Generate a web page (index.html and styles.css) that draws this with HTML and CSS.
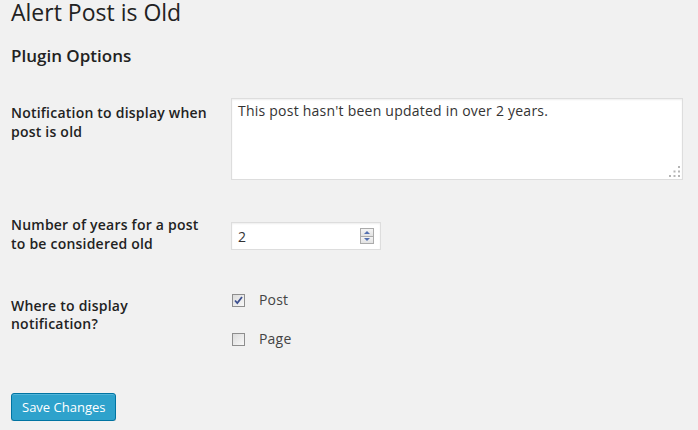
FILE: index.html
```html
<!DOCTYPE html>
<html>
<head>
<meta charset="utf-8">
<link rel="stylesheet" href="styles.css">
</head>
<body>
<div class="wrap">
  <h1 class="title">Alert Post is Old</h1>
  <h2 class="section">Plugin Options</h2>
  <div class="form-table">
    <div class="row row-1">
      <div class="th">Notification to display when post is old</div>
      <div class="td">
        <div class="textarea">This post hasn't been updated in over 2 years.
          <svg class="grip" width="12" height="12" viewBox="0 0 12 12">
            <rect x="9" y="0" width="2" height="2"/>
            <rect x="4.5" y="4.5" width="2" height="2"/><rect x="9" y="4.5" width="2" height="2"/>
            <rect x="0" y="9" width="2" height="2"/><rect x="4.5" y="9" width="2" height="2"/><rect x="9" y="9" width="2" height="2"/>
          </svg>
        </div>
      </div>
    </div>
    <div class="row row-2">
      <div class="th">Number of years for a post to be considered old</div>
      <div class="td">
        <div class="number">
          <span class="num-value">2</span>
          <span class="spinner">
            <span class="spin-btn"><span class="arrow-up"></span></span>
            <span class="spin-btn"><span class="arrow-down"></span></span>
          </span>
        </div>
      </div>
    </div>
    <div class="row row-3">
      <div class="th">Where to display notification?</div>
      <div class="td">
        <div class="option">
          <span class="checkbox">
            <svg width="11" height="11" viewBox="0 0 11 11"><path d="M2 5.5 L4.3 8 L9 2" fill="none" stroke="#3c4f8f" stroke-width="1.8"/></svg>
          </span>
          <span class="opt-label">Post</span>
        </div>
        <div class="option option-2">
          <span class="checkbox"></span>
          <span class="opt-label">Page</span>
        </div>
      </div>
    </div>
  </div>
  <div class="submit"><span class="button">Save Changes</span></div>
</div>
</body>
</html>
```
FILE: styles.css
```css
html, body {
  margin: 0;
  padding: 0;
  background: #f1f1f1;
}
body {
  font-family: "Open Sans", "Liberation Sans", sans-serif;
  color: #444;
}
.wrap {
  padding: 0 15px 0 11px;
}
.title {
  margin: 0;
  font-size: 23px;
  font-weight: 400;
  line-height: 25px;
  color: #222;
}
.section {
  margin: 20px 0 0;
  font-size: 17px;
  font-weight: 600;
  line-height: 22px;
  color: #222;
}
.form-table {
  margin-top: 16px;
}
.row {
  display: flex;
  align-items: flex-start;
}
.th {
  width: 200px;
  padding-right: 20px;
  font-size: 14px;
  font-weight: 600;
  line-height: 18.6px;
  letter-spacing: 0.22px;
  color: #222;
}
.td {
  flex: 1;
  padding-bottom: 15px;
}
.row-1 .th { padding-top: 21px; }
.row-1 .td { padding-top: 15px; }
.row-2 .th { padding-top: 21px; padding-bottom: 20px; }
.row-2 .td { padding-top: 27px; }
.row-3 .th { padding-top: 23.5px; }
.row-3 .td { padding-top: 20px; }

.textarea {
  position: relative;
  box-sizing: border-box;
  width: 452px;
  height: 82px;
  background: #fff;
  border: 1px solid #ddd;
  box-shadow: inset 0 1px 2px rgba(0,0,0,.07);
  padding: 2px 6px;
  font-size: 14px;
  line-height: 19.6px;
  letter-spacing: 0.23px;
  color: #333;
}
.grip {
  position: absolute;
  right: 1px;
  bottom: 1px;
  fill: #b5b5b5;
}
.number {
  box-sizing: border-box;
  width: 150px;
  height: 28px;
  background: #fff;
  border: 1px solid #ddd;
  box-shadow: inset 0 1px 2px rgba(0,0,0,.07);
  display: flex;
  align-items: center;
  padding: 0 6px 0 6px;
  font-size: 14px;
  color: #333;
}
.num-value {
  flex: 1;
}
.spinner {
  display: flex;
  flex-direction: column;
  width: 14px;
  height: 16px;
  border: 1px solid #ababab;
  box-sizing: border-box;
  background: #e9e9e9;
}
.spin-btn {
  flex: 1;
  display: flex;
  align-items: center;
  justify-content: center;
  background: linear-gradient(#f4f4f4, #e2e2e2);
}
.spin-btn + .spin-btn {
  border-top: 1px solid #ababab;
}
.arrow-up {
  width: 0; height: 0;
  border-left: 3px solid transparent;
  border-right: 3px solid transparent;
  border-bottom: 3px solid #5470b0;
}
.arrow-down {
  width: 0; height: 0;
  border-left: 3px solid transparent;
  border-right: 3px solid transparent;
  border-top: 3px solid #5470b0;
}
.option {
  display: flex;
  align-items: center;
  height: 14px;
}
.option-2 {
  margin-top: 25px;
}
.checkbox {
  box-sizing: border-box;
  width: 13px;
  height: 13px;
  margin-left: 1px;
  border: 1px solid #8e8e8e;
  background: linear-gradient(135deg, #dcdcdc, #f8f8f8);
  display: flex;
  align-items: center;
  justify-content: center;
}
.opt-label {
  margin-left: 14px;
  font-size: 14px;
  color: #444;
  line-height: 14px;
  letter-spacing: 0.2px;
}
.submit {
  margin-top: 32px;
}
.button {
  display: inline-block;
  box-sizing: border-box;
  height: 28px;
  padding: 0 10px 1px;
  font-size: 13px;
  line-height: 26px;
  color: #fff;
  background: #2ea2cc;
  border: 1px solid #0074a2;
  border-radius: 3px;
  box-shadow: inset 0 1px 0 rgba(120,200,230,.5), 0 1px 0 rgba(0,0,0,.15);
}
```
